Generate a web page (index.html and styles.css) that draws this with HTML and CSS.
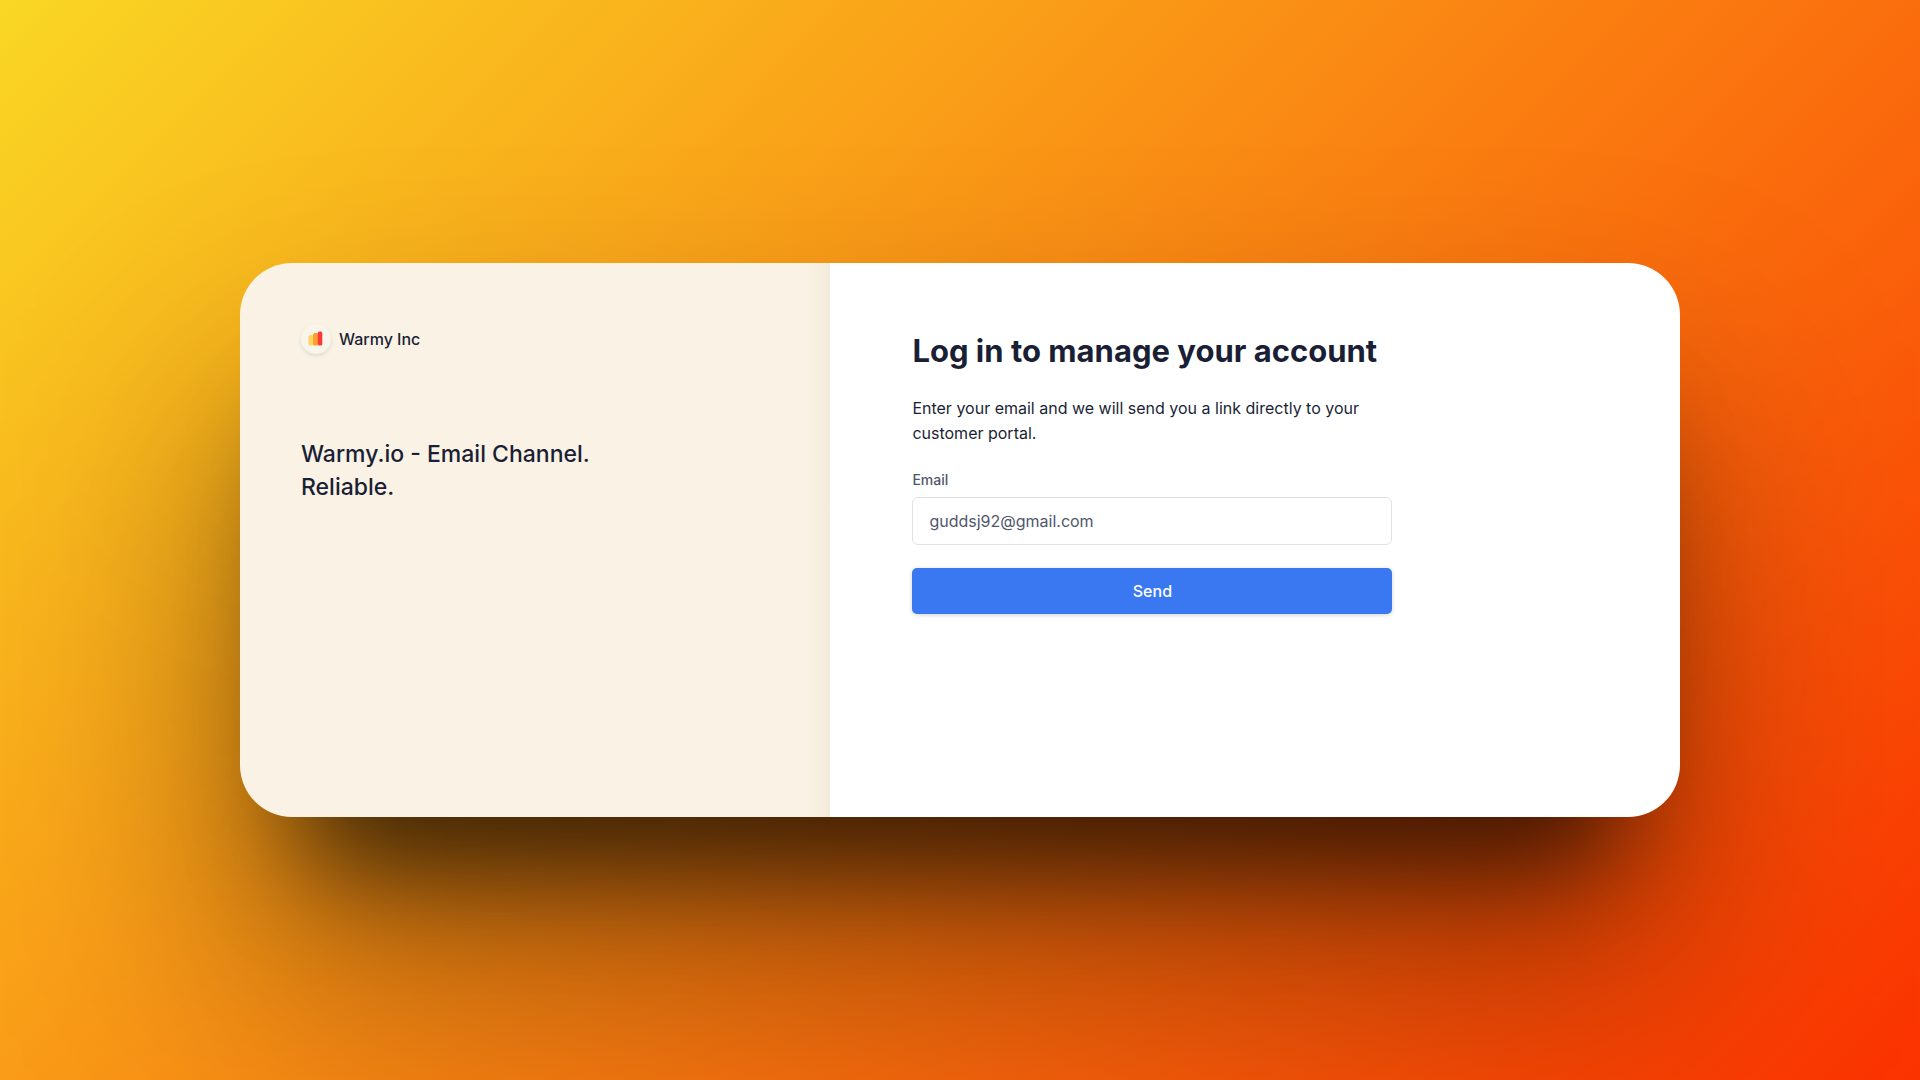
FILE: index.html
```html
<!DOCTYPE html>
<html lang="en">
<head>
    <meta charset="UTF-8">
    <meta name="viewport" content="width=device-width, initial-scale=1.0">
    <title>Warmy Inc - Log in</title>
    <link rel="stylesheet" href="styles.css">
</head>
<body>
    <main class="card">
        <section class="brand-panel">
            <div class="brand">
                <span class="brand-logo">
                    <svg width="16" height="16" viewBox="0 0 16 16" aria-hidden="true">
                        <rect x="0.5" y="4" width="5" height="10.5" rx="1.5" fill="#ffd666"/>
                        <rect x="5" y="2" width="5" height="12.5" rx="1.5" fill="#ff9f2e"/>
                        <rect x="9.8" y="0.6" width="4.5" height="14" rx="1.5" fill="#f93a37"/>
                    </svg>
                </span>
                <span class="brand-name">Warmy Inc</span>
            </div>
            <p class="tagline">Warmy.io - Email Channel. Reliable.</p>
        </section>
        <section class="login-panel">
            <form class="login-form">
                <h1>Log in to manage your account</h1>
                <p class="hint">Enter your email and we will send you a link directly to your customer portal.</p>
                <label for="email">Email</label>
                <input type="email" id="email" value="guddsj92@gmail.com">
                <button type="submit">Send</button>
            </form>
        </section>
    </main>
</body>
</html>
```

FILE: styles.css
```css
* {
    box-sizing: border-box;
    margin: 0;
    padding: 0;
}

body {
    font-family: Inter, 'Liberation Sans', sans-serif;
    display: flex;
    justify-content: center;
    align-items: center;
    min-height: 100vh;
    color: #1a1f36;
    background: linear-gradient(135deg, #f9d724, #fb3200);
}

.card {
    position: relative;
    isolation: isolate;
    display: flex;
    width: 75%;
}

/* soft shadows under the card */
.card::before,
.card::after {
    content: '';
    position: absolute;
    z-index: -1;
    border-radius: 52px;
}

.card::before {
    inset: 150px 0 -150px;
    background-color: rgba(0, 0, 0, 0.38);
    filter: blur(120px);
}

.card::after {
    inset: 160px 60px -50px;
    background-color: rgba(0, 0, 0, 0.62);
    filter: blur(55px);
}

.brand-panel {
    width: 41%;
    padding: 61px;
    border-radius: 52px 0 0 52px;
    background: linear-gradient(to left, #f3ebda, #faf3e5 24px);
}

.brand {
    display: flex;
    align-items: center;
    gap: 8px;
    margin-bottom: 84px;
}

.brand-logo {
    display: flex;
    justify-content: center;
    align-items: center;
    width: 30px;
    height: 30px;
    border-radius: 50%;
    background-color: #faf5ea;
    box-shadow: 0 2px 4px rgba(26, 31, 54, 0.12);
}

.brand-name {
    font-size: 16px;
    font-weight: 500;
}

.tagline {
    max-width: 320px;
    font-size: 23px;
    line-height: 33px;
    font-weight: 500;
}

.login-panel {
    flex: 1;
    padding: 68px 82px 203px;
    border-radius: 0 52px 52px 0;
    background-color: white;
}

.login-form {
    display: flex;
    flex-direction: column;
    max-width: 480px;
}

h1 {
    margin-bottom: 25px;
    font-size: 31px;
    line-height: 40px;
    font-weight: 700;
}

.hint {
    margin-bottom: 24px;
    font-size: 16px;
    line-height: 25px;
}

label {
    margin-bottom: 7px;
    font-size: 14px;
    line-height: 20px;
    font-weight: 500;
    color: #4f566b;
}

input {
    height: 48px;
    margin-bottom: 23px;
    padding: 0 16px;
    border: 1px solid #e0e1e6;
    border-radius: 6px;
    font-family: inherit;
    font-size: 16px;
    color: #4f566b;
}

button {
    height: 46px;
    border: none;
    border-radius: 5px;
    font-family: inherit;
    font-size: 16px;
    font-weight: 500;
    color: white;
    background-color: #3a78f2;
    box-shadow: 0 1px 4px rgba(26, 31, 54, 0.2);
    cursor: pointer;
}

button:hover {
    background-color: #2c69e0;
}
```
